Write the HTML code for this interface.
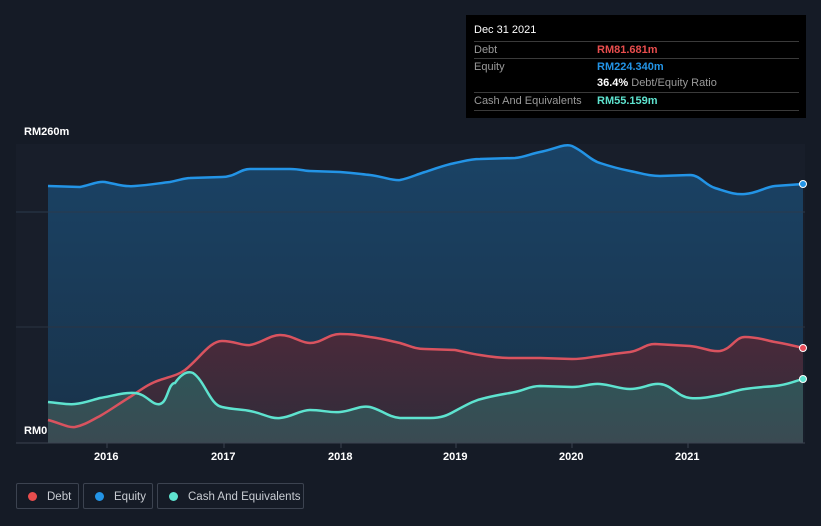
<!DOCTYPE html>
<html><head><style>
body{margin:0;width:821px;height:526px;background:#151b26;font-family:"Liberation Sans",sans-serif;overflow:hidden;position:relative}
.tt{position:absolute;left:466px;top:15px;width:340px;height:103px;background:#000;color:#fff;font-size:11px}
.row{position:absolute;left:8px;width:325px;border-top:1px solid #3a3a3a;height:17px;line-height:17px}
.lab{color:#9a9a9a}
.v{position:absolute;left:123px;font-weight:bold}
.leg{position:absolute;top:483px;height:26px;border:1px solid #3c4350;border-radius:2px;color:#c8ccd2;font-size:11.5px;line-height:26px;box-sizing:border-box;white-space:nowrap;overflow:hidden}
.dot{display:inline-block;width:9px;height:9px;border-radius:50%;margin:0 10px 0 11px;vertical-align:-1px}
.ax{position:absolute;color:#fff;font-size:11px;font-weight:bold}
</style></head><body>
<svg width="821" height="526" style="position:absolute;left:0;top:0">
<defs>
<linearGradient id="ge" x1="0" y1="0" x2="0" y2="1"><stop offset="0" stop-color="#1a4366"/><stop offset="1" stop-color="#193249"/></linearGradient>
<linearGradient id="gd" x1="0" y1="0" x2="0" y2="1"><stop offset="0" stop-color="#4a2a3a"/><stop offset="1" stop-color="#2f2c3a"/></linearGradient>
<linearGradient id="gc" x1="0" y1="0" x2="0" y2="1"><stop offset="0" stop-color="#2f5558"/><stop offset="1" stop-color="#3a4a52"/></linearGradient>
</defs>
<rect x="16" y="144" width="789" height="299" fill="#181e2a"/>
<path d="M48,186 L80,187 C90,185 98,181 105,182 C115,184 125,187 135,186 C150,185 160,183 170,182 C180,180 185,178 190,178 L222,177 C235,177 240,169 250,169 L290,169 C300,169 305,171 310,171 L340,172 C355,173 360,174 370,175 C385,177 393,181 400,180 C410,178 415,175 425,172 C440,167 445,165 455,163 C465,161 470,159 480,159 L515,158 C525,157 530,154 540,152 C555,149 565,143 572,146 C585,152 590,160 600,163 C612,167 620,169 630,171 C645,174 650,176 660,176 L690,175 C700,175 705,185 715,188 C728,192 735,195 745,194 C758,193 765,187 775,186 L803,184 L803,443 L48,443Z" fill="url(#ge)"/>
<path d="M48,420 C60,423 68,428 75,427 C85,425 92,420 100,416 C112,409 120,403 130,397 C142,389 150,383 160,380 C172,376 178,375 185,370 C200,358 210,341 222,341 C235,341 242,346 250,345 C262,343 270,335 280,335 C293,335 300,343 310,343 C322,343 328,334 340,334 C352,334 358,335 370,337 C385,339 390,341 400,343 C410,346 415,349 425,349 L455,350 C465,352 472,354 480,355 C492,357 500,358 510,358 L540,358 L572,359 C585,359 590,357 600,356 C612,354 620,353 630,352 C642,350 645,344 655,344 L690,346 C702,347 710,352 720,351 C732,349 735,337 745,337 C757,337 765,340 775,342 C787,344 795,346 803,348 L803,443 L48,443Z" fill="url(#gd)"/>
<path d="M48,402 C60,403 68,405 75,404 C85,403 92,400 100,398 C112,396 125,392 135,393 C147,394 152,406 160,404 C168,402 168,383 175,383 C182,373 188,371 193,373 C205,381 210,405 222,407 C235,410 242,409 250,411 C262,413 270,419 280,418 C292,417 300,410 310,410 C322,410 330,413 340,412 C352,411 360,405 370,407 C382,410 388,417 400,418 L430,418 C442,418 448,415 455,411 C468,404 475,400 485,398 C497,395 505,394 515,392 C525,390 530,386 540,386 L572,387 C585,387 590,383 600,384 C612,385 620,389 630,389 C643,389 650,383 660,384 C672,385 678,397 690,398 C700,399 710,397 720,395 C730,393 737,390 745,389 C757,387 765,387 775,386 C787,385 795,381 803,379 L803,443 L48,443Z" fill="url(#gc)"/>
<line x1="16" y1="212" x2="805" y2="212" stroke="#2a3a4c" stroke-width="1"/>
<line x1="16" y1="327" x2="805" y2="327" stroke="#2a3442" stroke-width="1"/>
<path d="M48,186 L80,187 C90,185 98,181 105,182 C115,184 125,187 135,186 C150,185 160,183 170,182 C180,180 185,178 190,178 L222,177 C235,177 240,169 250,169 L290,169 C300,169 305,171 310,171 L340,172 C355,173 360,174 370,175 C385,177 393,181 400,180 C410,178 415,175 425,172 C440,167 445,165 455,163 C465,161 470,159 480,159 L515,158 C525,157 530,154 540,152 C555,149 565,143 572,146 C585,152 590,160 600,163 C612,167 620,169 630,171 C645,174 650,176 660,176 L690,175 C700,175 705,185 715,188 C728,192 735,195 745,194 C758,193 765,187 775,186 L803,184" fill="none" stroke="#2394e6" stroke-width="2.5"/>
<path d="M48,420 C60,423 68,428 75,427 C85,425 92,420 100,416 C112,409 120,403 130,397 C142,389 150,383 160,380 C172,376 178,375 185,370 C200,358 210,341 222,341 C235,341 242,346 250,345 C262,343 270,335 280,335 C293,335 300,343 310,343 C322,343 328,334 340,334 C352,334 358,335 370,337 C385,339 390,341 400,343 C410,346 415,349 425,349 L455,350 C465,352 472,354 480,355 C492,357 500,358 510,358 L540,358 L572,359 C585,359 590,357 600,356 C612,354 620,353 630,352 C642,350 645,344 655,344 L690,346 C702,347 710,352 720,351 C732,349 735,337 745,337 C757,337 765,340 775,342 C787,344 795,346 803,348" fill="none" stroke="#d9535f" stroke-width="2.5"/>
<path d="M48,402 C60,403 68,405 75,404 C85,403 92,400 100,398 C112,396 125,392 135,393 C147,394 152,406 160,404 C168,402 168,383 175,383 C182,373 188,371 193,373 C205,381 210,405 222,407 C235,410 242,409 250,411 C262,413 270,419 280,418 C292,417 300,410 310,410 C322,410 330,413 340,412 C352,411 360,405 370,407 C382,410 388,417 400,418 L430,418 C442,418 448,415 455,411 C468,404 475,400 485,398 C497,395 505,394 515,392 C525,390 530,386 540,386 L572,387 C585,387 590,383 600,384 C612,385 620,389 630,389 C643,389 650,383 660,384 C672,385 678,397 690,398 C700,399 710,397 720,395 C730,393 737,390 745,389 C757,387 765,387 775,386 C787,385 795,381 803,379" fill="none" stroke="#5ee3cf" stroke-width="2.5"/>
<circle cx="803" cy="184" r="3.5" fill="#2394e6" stroke="#fff" stroke-width="1"/>
<circle cx="803" cy="348" r="3.5" fill="#e84d5a" stroke="#fff" stroke-width="1"/>
<circle cx="803" cy="379" r="3.5" fill="#5ee3cf" stroke="#fff" stroke-width="1"/>
<line x1="16" y1="443" x2="805" y2="443" stroke="#3c4350"/>
<g stroke="#3c4350"><line x1="107" y1="443" x2="107" y2="448"/><line x1="224" y1="443" x2="224" y2="448"/><line x1="341" y1="443" x2="341" y2="448"/><line x1="456" y1="443" x2="456" y2="448"/><line x1="572" y1="443" x2="572" y2="448"/><line x1="688" y1="443" x2="688" y2="448"/></g>
</svg>
<div class="ax" style="left:24px;top:126px">RM260m</div>
<div class="ax" style="left:24px;top:425px">RM0</div>
<div class="ax" style="left:94px;top:451px">2016</div>
<div class="ax" style="left:211px;top:451px">2017</div>
<div class="ax" style="left:328px;top:451px">2018</div>
<div class="ax" style="left:443px;top:451px">2019</div>
<div class="ax" style="left:559px;top:451px">2020</div>
<div class="ax" style="left:675px;top:451px">2021</div>
<div class="tt">
<div style="position:absolute;left:8px;top:9px">Dec 31 2021</div>
<div class="row" style="top:26px"><span class="lab">Debt</span><span class="v" style="color:#e84d4d">RM81.681m</span></div>
<div class="row" style="top:43px"><span class="lab">Equity</span><span class="v" style="color:#2394e6">RM224.340m</span></div>
<div class="row" style="top:60px;border-top:none"><span class="v">36.4% <span style="color:#9a9a9a;font-weight:normal">Debt/Equity Ratio</span></span></div>
<div class="row" style="top:77px"><span class="lab">Cash And Equivalents</span><span class="v" style="color:#5ee3cf">RM55.159m</span></div>
<div class="row" style="top:95px;height:0"></div>
</div>
<div class="leg" style="left:16px;width:63px"><span class="dot" style="background:#e84d4d"></span>Debt</div>
<div class="leg" style="left:83px;width:70px"><span class="dot" style="background:#2394e6"></span>Equity</div>
<div class="leg" style="left:157px;width:147px"><span class="dot" style="background:#5ee3cf"></span>Cash And Equivalents</div>
</body></html>
